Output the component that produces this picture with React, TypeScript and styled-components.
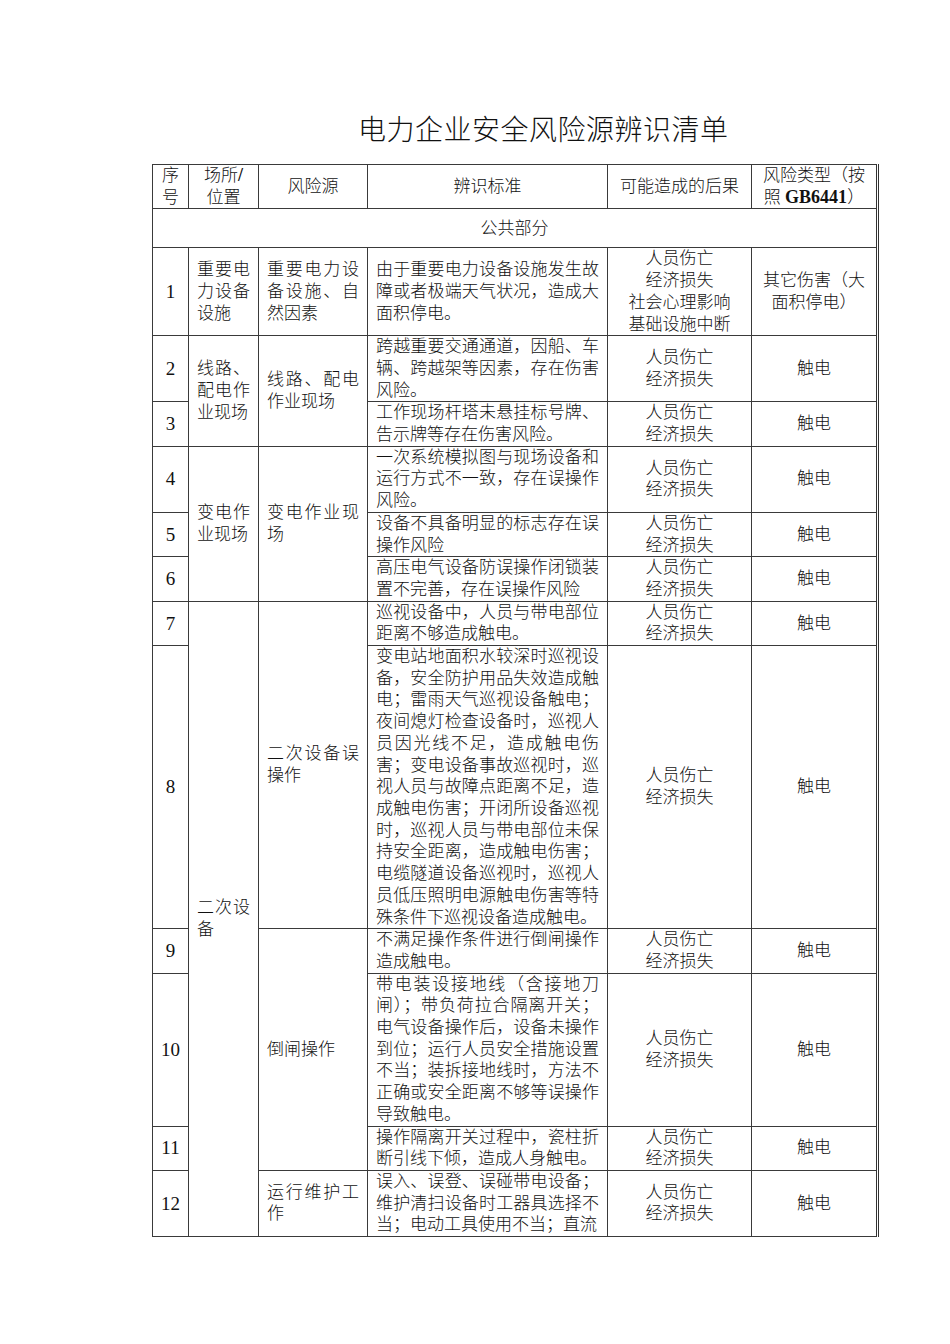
import React from "react";
import styled, { createGlobalStyle } from "styled-components";

const Global = createGlobalStyle`
  html, body { margin: 0; padding: 0; background: #fff; }
  body { font-family: "Liberation Serif", "Noto Sans CJK SC", serif; color: #111; }
`;

const Page = styled.div`
  width: 950px;
  min-height: 1344px;
  box-sizing: border-box;
  padding: 111px 0 0 152px;
  display: flex;
  flex-direction: column;
  align-items: flex-start;
`;

const Title = styled.h1`
  margin: 0 0 13px 206px;
  font-family: "Liberation Serif", "Noto Sans CJK SC", serif;
  font-weight: 300;
  font-size: 28px;
  letter-spacing: 0.5px;
  line-height: 40px;
  color: #111;
`;

const Sheet = styled.table`
  width: 725px;
  table-layout: fixed;
  border-collapse: collapse;
  font-size: 17px;
  line-height: 21.7px;
  font-weight: 300;
  border-right: 3px double #333;
`;

const Col = styled.col<{ $w: number }>`
  width: ${(p) => p.$w}px;
`;

const Cell = styled.td<{ $align?: "left" | "center" }>`
  border: 1px solid #3a3a3a;
  padding: 0 8px;
  vertical-align: middle;
  text-align: ${(p) => (p.$align === "center" ? "center" : "justify")};
  word-break: normal;
  line-break: strict;
`;

const NumCell = styled(Cell)`
  padding: 0 2px;
  text-align: center;
  font-size: 19px;
  font-weight: 400;
`;

const HeadCell = styled.th`
  border: 1px solid #3a3a3a;
  padding: 0 6px;
  height: 42px;
  vertical-align: middle;
  text-align: center;
  font-weight: 300;
`;

const Narrow = styled(HeadCell)`
  padding: 0 2px;
`;

const Bold = styled.b`
  font-weight: 700;
  font-size: 18px;
`;

const SectionCell = styled.td`
  border: 1px solid #3a3a3a;
  height: 38px;
  padding: 0;
  text-align: center;
  vertical-align: middle;
`;

const Lines = ({ items }: { items: string[] }) => (
  <>
    {items.map((t, i) => (
      <React.Fragment key={i}>
        {i > 0 && <br />}
        {t}
      </React.Fragment>
    ))}
  </>
);

const loss = ["人员伤亡", "经济损失"];

type Row = {
  n: string;
  place?: { text: string; span: number };
  source?: { text: string; span: number };
  std: string;
  result: string[];
  type: React.ReactNode;
};

const rows: Row[] = [
  {
    n: "1",
    place: { text: "重要电力设备设施", span: 1 },
    source: { text: "重要电力设备设施、自然因素", span: 1 },
    std: "由于重要电力设备设施发生故障或者极端天气状况，造成大面积停电。",
    result: ["人员伤亡", "经济损失", "社会心理影响", "基础设施中断"],
    type: <Lines items={["其它伤害（大", "面积停电）"]} />,
  },
  {
    n: "2",
    place: { text: "线路、配电作业现场", span: 2 },
    source: { text: "线路、配电作业现场", span: 2 },
    std: "跨越重要交通通道，因船、车辆、跨越架等因素，存在伤害风险。",
    result: loss,
    type: "触电",
  },
  {
    n: "3",
    std: "工作现场杆塔未悬挂标号牌、告示牌等存在伤害风险。",
    result: loss,
    type: "触电",
  },
  {
    n: "4",
    place: { text: "变电作业现场", span: 3 },
    source: { text: "变电作业现场", span: 3 },
    std: "一次系统模拟图与现场设备和运行方式不一致，存在误操作风险。",
    result: loss,
    type: "触电",
  },
  {
    n: "5",
    std: "设备不具备明显的标志存在误操作风险",
    result: loss,
    type: "触电",
  },
  {
    n: "6",
    std: "高压电气设备防误操作闭锁装置不完善，存在误操作风险",
    result: loss,
    type: "触电",
  },
  {
    n: "7",
    place: { text: "二次设备", span: 6 },
    source: { text: "二次设备误操作", span: 2 },
    std: "巡视设备中，人员与带电部位距离不够造成触电。",
    result: loss,
    type: "触电",
  },
  {
    n: "8",
    std: "变电站地面积水较深时巡视设备，安全防护用品失效造成触电；雷雨天气巡视设备触电；夜间熄灯检查设备时，巡视人员因光线不足，造成触电伤害；变电设备事故巡视时，巡视人员与故障点距离不足，造成触电伤害；开闭所设备巡视时，巡视人员与带电部位未保持安全距离，造成触电伤害；电缆隧道设备巡视时，巡视人员低压照明电源触电伤害等特殊条件下巡视设备造成触电。",
    result: loss,
    type: "触电",
  },
  {
    n: "9",
    source: { text: "倒闸操作", span: 3 },
    std: "不满足操作条件进行倒闸操作造成触电。",
    result: loss,
    type: "触电",
  },
  {
    n: "10",
    std: "带电装设接地线（含接地刀闸）；带负荷拉合隔离开关；电气设备操作后，设备未操作到位；运行人员安全措施设置不当；装拆接地线时，方法不正确或安全距离不够等误操作导致触电。",
    result: loss,
    type: "触电",
  },
  {
    n: "11",
    std: "操作隔离开关过程中，瓷柱折断引线下倾，造成人身触电。",
    result: loss,
    type: "触电",
  },
  {
    n: "12",
    source: { text: "运行维护工作", span: 1 },
    std: "误入、误登、误碰带电设备；维护清扫设备时工器具选择不当；电动工具使用不当；直流",
    result: loss,
    type: "触电",
  },
];

export default function App() {
  return (
    <>
      <Global />
      <Page lang="zh-CN">
        <Title>电力企业安全风险源辨识清单</Title>
        <Sheet>
          <colgroup>
            <Col $w={36} />
            <Col $w={70} />
            <Col $w={109} />
            <Col $w={240} />
            <Col $w={144} />
            <Col $w={126} />
          </colgroup>
          <thead>
            <tr>
              <Narrow>
                <Lines items={["序", "号"]} />
              </Narrow>
              <HeadCell>
                场所<Bold>/</Bold>
                <br />
                位置
              </HeadCell>
              <HeadCell>风险源</HeadCell>
              <HeadCell>辨识标准</HeadCell>
              <HeadCell>可能造成的后果</HeadCell>
              <HeadCell>
                风险类型（按
                <br />照 <Bold>GB6441</Bold>）
              </HeadCell>
            </tr>
          </thead>
          <tbody>
            <tr>
              <SectionCell colSpan={6}>公共部分</SectionCell>
            </tr>
            {rows.map((r) => (
              <tr key={r.n}>
                <NumCell>{r.n}</NumCell>
                {r.place && <Cell rowSpan={r.place.span}>{r.place.text}</Cell>}
                {r.source && <Cell rowSpan={r.source.span}>{r.source.text}</Cell>}
                <Cell>{r.std}</Cell>
                <Cell $align="center">
                  <Lines items={r.result} />
                </Cell>
                <Cell $align="center">{r.type}</Cell>
              </tr>
            ))}
          </tbody>
        </Sheet>
      </Page>
    </>
  );
}
